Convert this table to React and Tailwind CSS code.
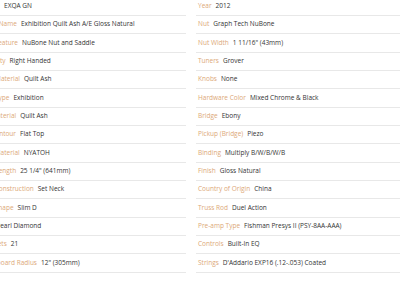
const leftSpecs = [
  ["Item ID", "EXQA GN"],
  ["Model Name", "Exhibition Quilt Ash A/E Gloss Natural"],
  ["Main Feature", "NuBone Nut and Saddle"],
  ["Dexterity", "Right Handed"],
  ["Body Material", "Quilt Ash"],
  ["Body Type", "Exhibition"],
  ["Top Material", "Quilt Ash"],
  ["Top Contour", "Flat Top"],
  ["Neck Material", "NYATOH"],
  ["Scale Length", "25 1/4\" (641mm)"],
  ["Neck Construction", "Set Neck"],
  ["Neck Shape", "Slim D"],
  ["Inlay", "Pearl Diamond"],
  ["# of Frets", "21"],
  ["Fingerboard Radius", "12\" (305mm)"],
];

const rightSpecs = [
  ["Year", "2012"],
  ["Nut", "Graph Tech NuBone"],
  ["Nut Width", "1 11/16\" (43mm)"],
  ["Tuners", "Grover"],
  ["Knobs", "None"],
  ["Hardware Color", "Mixed Chrome & Black"],
  ["Bridge", "Ebony"],
  ["Pickup (Bridge)", "Piezo"],
  ["Binding", "Multiply B/W/B/W/B"],
  ["Finish", "Gloss Natural"],
  ["Country of Origin", "China"],
  ["Truss Rod", "Duel Action"],
  ["Pre-amp Type", "Fishman Presys II (PSY-8AA-AAA)"],
  ["Controls", "Built-In EQ"],
  ["Strings", "D'Addario EXP16 (.12-.053) Coated"],
];

const SpecColumn = ({ specs }) => (
  <div className="flex flex-col">
    {specs.map(([label, value], i) => (
      <div
        key={i}
        className="h-[18.33px] flex items-center px-[2px] border-b border-[#e8e8e8] whitespace-nowrap"
      >
        <span className="text-[#dca878]">{label}</span>
        <span className="ml-[4px] text-[#333333]">{value}</span>
      </div>
    ))}
  </div>
);

const App = () => {
  return (
    <div className="w-[400px] h-[284px] overflow-hidden bg-white">
      <div
        className="w-[424px] ml-[-24px] mt-[-2.3px] grid grid-cols-[210px_204px] gap-x-[10px] text-[6.5px] leading-none"
        style={{ fontFamily: "'Open Sans', 'Liberation Sans', sans-serif" }}
      >
        <SpecColumn specs={leftSpecs} />
        <SpecColumn specs={rightSpecs} />
      </div>
    </div>
  );
};

export default App;
